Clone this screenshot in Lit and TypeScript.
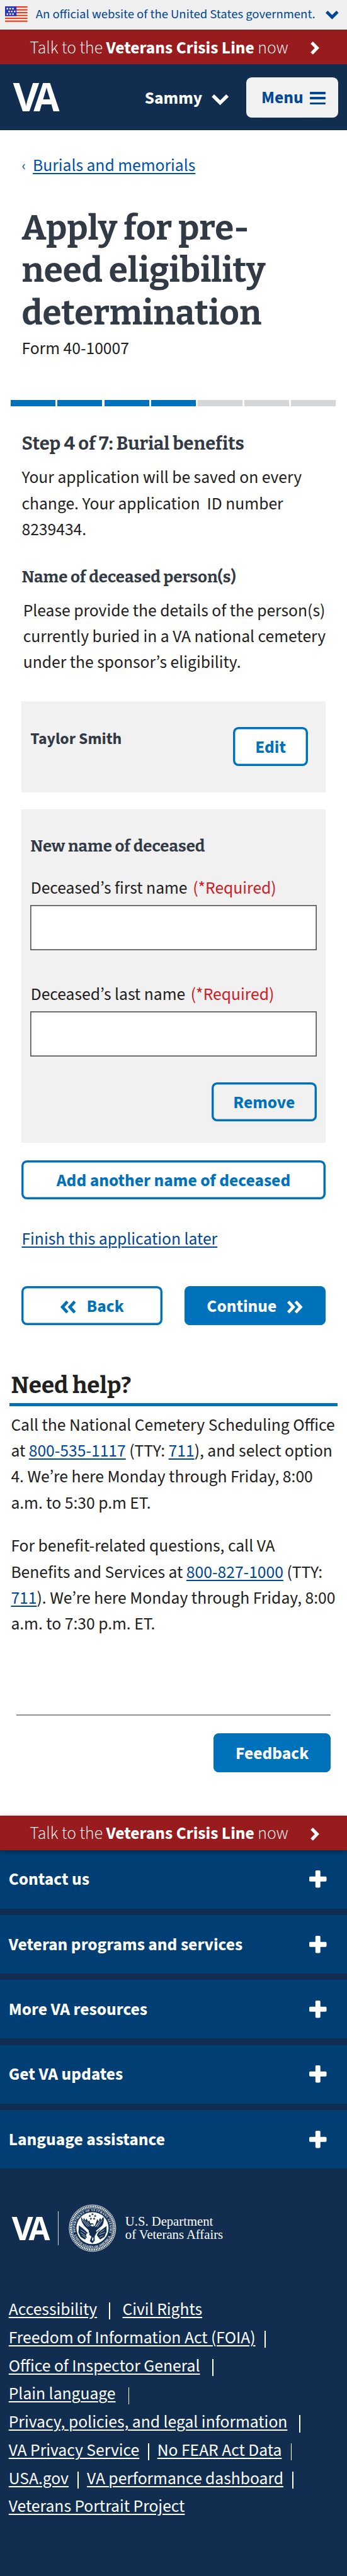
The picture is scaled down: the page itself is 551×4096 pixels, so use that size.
import { LitElement, html, css, svg } from "lit";

const FOOTER_PANELS = ["Contact us", "Veteran programs and services", "More VA resources", "Get VA updates", "Language assistance"];

type FooterItem = { label: string; before?: number; after?: number };
const FOOTER_LINKS: FooterItem[][] = [
  [{ label: "Accessibility", after: 11 }, { label: "Civil Rights", before: 11.4 }],
  [{ label: "Freedom of Information Act (FOIA)", after: 8.5 }],
  [{ label: "Office of Inspector General", after: 11.5 }],
  [{ label: "Plain language", after: 11.6 }],
  [{ label: "Privacy, policies, and legal information", after: 11 }],
  [{ label: "VA Privacy Service", after: 8 }, { label: "No FEAR Act Data", before: 7.6, after: 8.2 }],
  [{ label: "USA.gov", after: 8.2 }, { label: "VA performance dashboard", before: 7.7, after: 8.2 }],
  [{ label: "Veterans Portrait Project" }],
];

const star = (x: number, y: number) => {
  const pts = Array.from({ length: 10 }, (_, i) => {
    const r = i % 2 ? 1.1 : 2.7;
    const a = (Math.PI / 5) * i - Math.PI / 2;
    return `${(x + r * Math.cos(a)).toFixed(2)},${(y + r * Math.sin(a)).toFixed(2)}`;
  }).join(" ");
  return svg`<polygon points=${pts} fill="#112e51"/>`;
};

const vaLogo = (cls: string) => html`
  <svg class=${cls} viewBox="0 0 42.3 25.8" aria-label="VA">
    <text class="va" x="-0.2" y="25.8" font-size="36.2" textLength="24" lengthAdjust="spacingAndGlyphs">V</text>
    <text class="va" x="18.7" y="25.8" font-size="36.2" textLength="24" lengthAdjust="spacingAndGlyphs">A</text>
  </svg>`;

const flag = html`
  <svg class="flag" viewBox="0 0 42 29">
    <rect width="42" height="29" fill="#fff"/>
    ${[0, 5.3, 10.6, 15.9, 21.2, 26.5].map((y) => svg`<rect y=${y} width="42" height="2.5" fill="#f5310c"/>`)}
    <rect width="21.5" height="18.3" fill="#2a37bd"/>
    ${[[3, 3], [8.2, 3], [13.4, 3], [6.2, 8.2], [11.2, 8.2], [16.6, 8.2], [3, 13.2], [8.2, 13.2], [13.4, 13.2]].map(
      ([x, y]) => svg`<rect x=${x} y=${y} width="2.8" height="2.8" fill="#fff"/>`
    )}
  </svg>`;

const seal = html`
  <svg class="seal" viewBox="-44 -44 88 88">
    <circle r="43" fill="none" stroke="#fff" stroke-width="1"/>
    <circle r="39.8" fill="none" stroke="#fff" stroke-width="3.6" stroke-dasharray="2 1.2"/>
    <circle r="37" fill="none" stroke="#fff" stroke-width=".6"/>
    <circle r="29.6" fill="#fff"/>
    <path id="arcTop" d="M-29.6 12.5A32 32 0 1 1 29.6 12.5" fill="none"/>
    <path id="arcBottom" d="M-35 9A36 36 0 0 0 35 9" fill="none"/>
    <text class="ring"><textPath href="#arcTop" startOffset="5" textLength="116">DEPARTMENT OF VETERANS AFFAIRS</textPath></text>
    <text class="ring"><textPath href="#arcBottom" startOffset="4" textLength="85">UNITED STATES OF AMERICA</textPath></text>
    ${[[0, -25.5], [-5, -22.5], [5, -22.5], [-3, -17.3], [3, -17.3]].map(([x, y]) => star(x, y))}
    <path fill="#112e51" d="M-25-5L-9 7L-8 14L-14 21L-22 16L-26 8ZM26-4L11 7L8 13L14 21L22 16L26 7Z"/>
    <path fill="#112e51" d="M-21-21Q-22-13-15-4L-7 4L-6 12L-2 16L-5 24L0 28L4 23L4 15L8 8Q14 4 17-3Q23-12 20-21L16-15L14-19L11-12L9-17L6-9L4-3L1-9L-4-9L-6-14L-8-12L-11-18L-13-14L-16-19L-17-14Z"/>
    <path stroke="#fff" stroke-width="2.2" d="M-26-10.5L-8 8M26-10L7 6"/>
    <path stroke="#fff" stroke-width=".8" fill="none" d="M-19-15L-9-3M-15-14L-6-3M-10-12L-4-4M18-15L9-2M14-14L7-3M10-10L5-2M-22 3L-13 9M-22 8L-13 14M-19 13L-12 18M14 8L22 3M12 12L23 8M13 17L20 14"/>
    <path fill="#fff" d="M-4-6L1-7L3-4L-1-3ZM-11 10L-5 9L-7 13L-2 15L-8 19L-12 15ZM0 17L2 18L1 24L-1 22Z"/>
  </svg>`;

const crisisLine = html`
  <div class="crisis">
    <span>Talk to the <b>Veterans Crisis Line</b> now</span>
    <svg class="chevRight" viewBox="0 0 7.7 12"><path d="M1.2 1L6 6L1.2 11" /></svg>
  </div>`;

class AppRoot extends LitElement {
  static styles = css`
    :host { display: block; background: #fff; }
    * { box-sizing: border-box; }
    .page {
      zoom: 1.7219; width: 320px; height: 2378.8px; overflow: hidden; background: #fff; color: #212121;
      font: 400 16px/24px "Source Sans 3", "Noto Sans CJK JP", sans-serif;
    }
    svg { display: block; flex: none; overflow: visible; }
    h1, h2, h3, h4, p { margin: 0; }
    .va { font-family: "Open Sans", sans-serif; font-weight: 700; fill: #fff; }
    a { color: #004795; text-decoration: underline; text-decoration-thickness: 1px; text-underline-offset: 1.8px; }

    .gov { height: 27px; margin-bottom: .5px; background: #f0f0f0; display: flex; align-items: center; padding: 0 8px .8px 4.9px; color: #004795; font-size: 12px; white-space: nowrap; }
    .flag { width: 20.7px; height: 14.4px; margin-right: 7.4px; }
    .govText { flex: 1; }
    .chevGov { width: 12px; height: 7.6px; margin-top: .8px; }
    .chevGov path { fill: none; stroke: #004795; stroke-width: 2.8; }

    .crisis { height: 32px; background: #981b1e; color: #fff; display: flex; align-items: center; justify-content: space-between; padding: 2.2px 26px 0 27.5px; font-weight: 300; white-space: nowrap; }
    .crisis b { font-weight: 700; }
    .chevRight { width: 7.7px; height: 12px; }
    .chevRight path { fill: none; stroke: #fff; stroke-width: 3; }

    .header { height: 61px; background: #112e51; display: flex; align-items: center; padding: 0 8px 0 12.2px; }
    .logo { width: 42.3px; height: 25.8px; margin-right: auto; margin-top: .8px; }
    .user { color: #fff; font-weight: 700; display: flex; align-items: center; gap: 8.5px; margin-right: 16.2px; padding-top: 1.6px; }
    .chevUser { width: 15.8px; height: 9.8px; margin-top: 2px; }
    .chevUser path { fill: none; stroke: #fff; stroke-width: 3.2; }
    .menu { width: 85px; height: 37px; border-radius: 5px; background: #f1f1f1; color: #004795; font-weight: 700; display: flex; align-items: center; padding: 1.3px 12px 0 14px; justify-content: space-between; }
    .bars { width: 14px; height: 12px; display: flex; flex-direction: column; justify-content: space-between; }
    .bars i { height: 2.2px; border-radius: .6px; background: #004795; }

    .main { padding: 0 20px; }
    .crumb { display: flex; margin-top: 20.6px; color: #0052a8; }
    .crumb span { width: 10.2px; font-size: 14px; }
    .crumb a { color: #0052a8; }
    h1, h2, h3, h4 { font-family: "Bitter", "DejaVu Serif Condensed", serif; font-weight: 700; color: #323a45; white-space: nowrap; }
    h1 { font-size: 31.8px; line-height: 39px; margin-top: 26.7px; }
    .form { margin-top: 1.4px; }
    .progress { display: flex; gap: 1.8px; height: 6px; padding: 0 10.3px 0 10px; margin: 35.1px 0 22.3px; }
    .progress i { flex: 1; background: #d6d7d9; }
    .progress .done { background: #0071bb; }
    h2 { font-size: 16.85px; }
    .saved { margin-top: 7.7px; }
    h3 { font-size: 15px; margin-top: 19.8px; }
    .explain { margin-top: 7px; padding-left: 1.3px; white-space: nowrap; }
    .card { background: #f1f1f1; }
    .person { height: 84px; margin-top: 23.4px; display: flex; justify-content: space-between; padding: 24px 16px 0 8px; font-size: 15px; font-weight: 700; color: #323a45; }
    .person span { margin-top: -.7px; }
    .entry { height: 308px; margin-top: 16px; padding: 21.8px 8px 0; display: flex; flex-direction: column; }
    h4 { font-size: 15px; margin-bottom: 15px; }
    .label { padding-left: .3px; }
    .label span { color: #cd2026; margin-left: 5px; }
    .input { height: 42px; box-shadow: inset 0 0 0 1px #5b5b5b; background: #fff; margin: 3.2px 0 29px; }
    .last { margin-bottom: 24px; }
    .btn { height: 36px; box-shadow: inset 0 0 0 2px #0071bb; border-radius: 5px; background: #fff; color: #0071bb; font-size: 16px; font-weight: 700; display: flex; align-items: center; justify-content: center; white-space: nowrap; padding-top: 1.8px; }
    .edit { width: 69px; }
    .remove { width: 97px; align-self: flex-end; background: none; }
    .add { margin-top: 16.2px; }
    .later { margin-top: 25px; }
    .nav { display: flex; gap: 20px; margin-top: 31.2px; }
    .nav .btn { flex: 1; gap: 10px; }
    .btn.primary { background: #0071bb; color: #fff; }
    .dbl { width: 14.2px; height: 12px; }
    .dbl path { fill: none; stroke: currentColor; stroke-width: 2.8; }

    .help { padding: 0 8.5px; margin-top: 41.2px; }
    .help h2 { font-size: 21.4px; line-height: 30px; color: #212121; padding: 0 0 .6px 1.7px; border-bottom: 3px solid #0071bb; }
    .help p { padding-left: 1.6px; margin-top: 5.6px; white-space: nowrap; }
    .help p + p { margin-top: 16px; }
    .feedback { margin: 71.2px 15px 0; display: flex; flex-direction: column; align-items: flex-end; gap: 16px; }
    .divider { width: 100%; height: 1px; background: #929292; }
    .feedback .btn { width: 108px; }

    .footer { background: #112e51; margin-top: 40.1px; height: 760px; color: #fff; }
    .footer .crisis { position: relative; box-shadow: 0 1px 4px rgba(0, 0, 0, .4); padding-top: 2px; }
    .panels { display: grid; gap: 6px; }
    .panel { height: 54px; background: #003e73; display: flex; align-items: center; justify-content: space-between; padding: 1px 19px 0 8px; font-weight: 700; }
    .plus { width: 16px; height: 16px; margin-top: -1px; }
    .brand { display: flex; align-items: center; margin: 33.4px 0 40.6px 10.8px; height: 44px; }
    .smallLogo { width: 34.7px; height: 21.3px; margin-right: 8px; }
    .rule { width: .6px; height: 31.5px; background: #d6d7d9; margin-right: 9px; }
    .seal { width: 44px; height: 44px; margin-right: 8.4px; }
    .ring { font: 700 5.6px "Liberation Serif", serif; fill: #fff; }
    .dept { font: 400 12px/12.5px "Liberation Serif", serif; white-space: nowrap; }
    .links { padding-left: 8px; line-height: 26px; }
    .links div { display: flex; align-items: center; white-space: nowrap; height: 26px; }
    .links a { color: #fff; }
    .bar { width: 1px; height: 15.7px; background: #fff; margin-top: 1.7px; }
  `;

  render() {
    return html`
      <div class="page">
        <div class="gov">${flag}<span class="govText">An official website of the United States government.</span>
          <svg class="chevGov" viewBox="0 0 12 7.6"><path d="M1 1L6 6L11 1"/></svg>
        </div>
        ${crisisLine}
        <div class="header">
          ${vaLogo("logo")}
          <div class="user">Sammy <svg class="chevUser" viewBox="0 0 15.8 9.8"><path d="M1.2 1.2L7.9 7.8L14.6 1.2"/></svg></div>
          <div class="menu">Menu <div class="bars"><i></i><i></i><i></i></div></div>
        </div>
        <div class="main">
          <div class="crumb"><span>‹</span><a>Burials and memorials</a></div>
          <h1>Apply for pre-<br>need eligibility<br>determination</h1>
          <div class="form">Form 40-10007</div>
        </div>
        <div class="progress">${[1, 2, 3, 4, 5, 6, 7].map((n) => html`<i class=${n <= 4 ? "done" : ""}></i>`)}</div>
        <div class="main">
          <h2>Step 4 of 7: Burial benefits</h2>
          <p class="saved">Your application will be saved on every<br>change. Your application&nbsp; ID number<br>8239434.</p>
          <h3>Name of deceased person(s)</h3>
          <p class="explain">Please provide the details of the person(s)<br>currently buried in a VA national cemetery<br>under the sponsor’s eligibility.</p>
          <div class="card person"><span>Taylor Smith</span><div class="btn edit">Edit</div></div>
          <div class="card entry">
            <h4>New name of deceased</h4>
            <div class="label">Deceased’s first name<span>(*Required)</span></div>
            <div class="input"></div>
            <div class="label">Deceased’s last name<span>(*Required)</span></div>
            <div class="input last"></div>
            <div class="btn remove">Remove</div>
          </div>
          <div class="btn add">Add another name of deceased</div>
          <div class="later"><a>Finish this application later</a></div>
          <div class="nav">
            <div class="btn"><svg class="dbl" viewBox="0 0 14.2 12"><path d="M6.4 1L1.8 6L6.4 11M13.2 1L8.6 6L13.2 11"/></svg>Back</div>
            <div class="btn primary">Continue<svg class="dbl" viewBox="0 0 14.2 12"><path d="M1 1L5.6 6L1 11M7.8 1L12.4 6L7.8 11"/></svg></div>
          </div>
        </div>
        <div class="help">
          <h2>Need help?</h2>
          <p>Call the National Cemetery Scheduling Office<br>at <a>800-535-1117</a> (TTY: <a>711</a>), and select option<br>4. We’re here Monday through Friday, 8:00<br>a.m. to 5:30 p.m ET.</p>
          <p>For benefit-related questions, call VA<br>Benefits and Services at <a>800-827-1000</a> (TTY:<br><a>711</a>). We’re here Monday through Friday, 8:00<br>a.m. to 7:30 p.m. ET.</p>
        </div>
        <div class="feedback"><div class="divider"></div><div class="btn primary">Feedback</div></div>
        <div class="footer">
          ${crisisLine}
          <div class="panels">
            ${FOOTER_PANELS.map((t) => html`<div class="panel">${t}
              <svg class="plus" viewBox="0 0 16 16"><path fill="#fff" d="M6.7 0h2.6q1 0 1 1v4.7H15q1 0 1 1v2.6q0 1-1 1h-4.7V15q0 1-1 1H6.7q-1 0-1-1v-4.7H1q-1 0-1-1V6.7q0-1 1-1h4.7V1q0-1 1-1z"/></svg>
            </div>`)}
          </div>
          <div class="brand">
            ${vaLogo("smallLogo")}<div class="rule"></div>${seal}
            <div class="dept">U.S. Department<br>of Veterans Affairs</div>
          </div>
          <div class="links">
            ${FOOTER_LINKS.map((row) => html`<div>${row.map((it) => html`<a style="margin-left:${it.before ?? 0}px">${it.label}</a>${it.after ? html`<span class="bar" style="margin-left:${it.after}px"></span>` : ""}`)}</div>`)}
          </div>
        </div>
      </div>`;
  }
}
customElements.define("app-root", AppRoot);
